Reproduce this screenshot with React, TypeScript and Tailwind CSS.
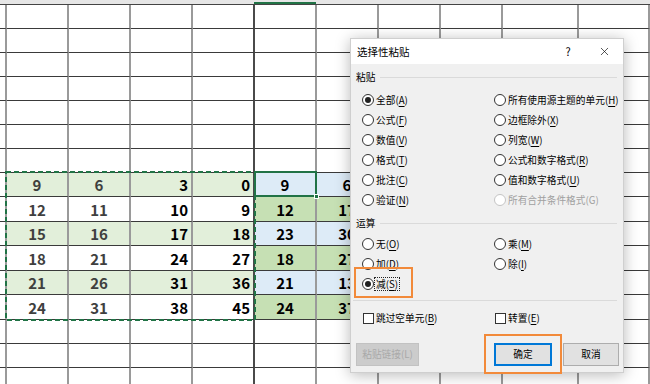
import React from 'react';
import { X } from 'lucide-react';

// column widths incl. right grid line (x lines at 6, 68, 130 ... 502, 578)
const COLS = ['w-[7px]', 'w-[62px]', 'w-[62px]', 'w-[62px]', 'w-[62px]', 'w-[62px]', 'w-[62px]', 'w-[62px]', 'w-[62px]', 'w-[76px]', 'flex-1'];

const ROWS = [
  'h-[24px]', 'h-[24px]', 'h-[24px]', 'h-[24px]', 'h-[24px]', 'h-[24px]', 'h-[24px]',
  'h-[24px]', 'h-[25px]', 'h-[24px]', 'h-[25px]', 'h-[24px]', 'h-[25px]',
  'h-[24px]', 'h-[24px]', 'h-[24px]',
];

const DATA: { vals: string[]; band: boolean }[] = [
  { vals: ['9', '6', '3', '0', '9', '6'], band: true },
  { vals: ['12', '11', '10', '9', '12', '17'], band: false },
  { vals: ['15', '16', '17', '18', '23', '30'], band: true },
  { vals: ['18', '21', '24', '27', '18', '27'], band: false },
  { vals: ['21', '26', '31', '36', '21', '13'], band: true },
  { vals: ['24', '31', '38', '45', '24', '37'], band: false },
];
const FIRST_DATA_ROW = 7;

function cellBg(col: number, band: boolean) {
  if (col >= 1 && col <= 4) return band ? 'bg-[#e2efda]' : 'bg-white';
  if (col === 5 || col === 6) return band ? 'bg-[#ddebf7]' : 'bg-[#c6e0b4]';
  return 'bg-white';
}

function Sheet() {
  return (
    <div className="relative font-['Noto_Sans_CJK_SC',sans-serif]">
      <div className="flex h-[5px] border-b border-b-[#444] bg-[#e6e6e6]">
        <div className="w-[254px]" />
        <div className="w-[62px] border-b-2 border-b-[#217346]" />
      </div>
      {ROWS.map((h, r) => {
        const d = DATA[r - FIRST_DATA_ROW];
        return (
          <div key={r} className={`flex ${h}`}>
            {COLS.map((w, c) => {
              const v = d && c >= 1 && c <= 6 ? d.vals[c - 1] : '';
              const right = c === 3 || c === 4;
              const soft = c === 1 || c === 2;
              return (
                <div
                  key={c}
                  className={[
                    w,
                    'flex shrink-0 items-center border-b border-b-[#3a3a3a] border-r-2 text-[15px] font-bold leading-none',
                    c === 4 ? 'border-r-[#4a4a4a]' : 'border-r-[#9a9a9a]',
                    right ? 'justify-end pr-[3px]' : 'justify-center',
                    soft ? 'text-[#3f3f3f]' : 'text-black',
                    d ? cellBg(c, d.band) : 'bg-white',
                  ].join(' ')}
                >
                  {v}
                </div>
              );
            })}
          </div>
        );
      })}

      {/* copy marquee */}
      <svg className="absolute left-[5px] top-[171px]" width="251" height="150">
        <rect x="1" y="1" width="249" height="148" fill="none" stroke="#217346" strokeWidth="2" strokeDasharray="5 3" />
      </svg>
      {/* active cell */}
      <div className="absolute left-[254px] top-[171px] h-[26px] w-[63px] border-2 border-[#217346]" />
      <div className="absolute left-[314px] top-[194px] h-[5px] w-[5px] border border-white bg-[#217346]" />
    </div>
  );
}

function Key({ text, k }: { text: string; k: string }) {
  return (
    <>
      {text}(<span className="underline underline-offset-2">{k}</span>)
    </>
  );
}

function Radio({ checked, disabled, children }: { checked?: boolean; disabled?: boolean; children: React.ReactNode }) {
  return (
    <div className={`flex h-[20px] items-center ${disabled ? 'text-[#a0a0a0]' : 'text-black'}`}>
      <span
        className={`grid h-[12px] w-[12px] shrink-0 place-items-center rounded-full border bg-white ${
          disabled ? 'border-[#c4c4c4]' : 'border-[#333]'
        }`}
      >
        {checked ? <span className="h-[6px] w-[6px] rounded-full bg-[#222]" /> : null}
      </span>
      <span className="ml-[2px] whitespace-nowrap">{children}</span>
    </div>
  );
}

function Check({ children }: { children: React.ReactNode }) {
  return (
    <div className="flex h-[20px] items-center">
      <span className="ml-[1px] h-[11px] w-[11px] shrink-0 border border-[#333] bg-white" />
      <span className="ml-[2px] whitespace-nowrap">{children}</span>
    </div>
  );
}

function GroupLabel({ children }: { children: React.ReactNode }) {
  return (
    <div className="flex h-[14px] items-center pl-[5px] pr-[6px]">
      <span>{children}</span>
      <span className="ml-[5px] h-px flex-1 bg-[#dadada]" />
    </div>
  );
}

function PasteDialog() {
  return (
    <div className="absolute left-[350px] top-[38px] flex h-[335px] w-[274px] flex-col border border-[#cfcfcf] bg-[#f0f0f0] font-['Noto_Sans_CJK_SC',sans-serif] text-[9.7px] text-black shadow-[0_2px_14px_rgba(0,0,0,0.28)]">
      <div className="flex h-[25px] items-center bg-white pl-[6px] pr-[9px]">
        <span className="flex-1 text-[10.5px]">选择性粘贴</span>
        <span className="w-[20px] text-center text-[11px]">?</span>
        <span className="ml-[16px] grid w-[20px] place-items-center">
          <X size={13} strokeWidth={1.2} />
        </span>
      </div>

      <div className="mt-[6px]">
        <GroupLabel>粘贴</GroupLabel>
      </div>
      <div className="mt-[6px] grid grid-cols-[132px_1fr] pl-[11px]">
        <Radio checked><Key text="全部" k="A" /></Radio>
        <Radio><Key text="所有使用源主题的单元" k="H" /></Radio>
        <Radio><Key text="公式" k="F" /></Radio>
        <Radio><Key text="边框除外" k="X" /></Radio>
        <Radio><Key text="数值" k="V" /></Radio>
        <Radio><Key text="列宽" k="W" /></Radio>
        <Radio><Key text="格式" k="T" /></Radio>
        <Radio><Key text="公式和数字格式" k="R" /></Radio>
        <Radio><Key text="批注" k="C" /></Radio>
        <Radio><Key text="值和数字格式" k="U" /></Radio>
        <Radio><Key text="验证" k="N" /></Radio>
        <Radio disabled>所有合并条件格式(G)</Radio>
      </div>

      <div className="mt-[6px]">
        <GroupLabel>运算</GroupLabel>
      </div>
      <div className="mt-[4px] grid grid-cols-[132px_1fr] pl-[11px]">
        <Radio><Key text="无" k="O" /></Radio>
        <Radio><Key text="乘" k="M" /></Radio>
        <Radio><Key text="加" k="D" /></Radio>
        <Radio><Key text="除" k="I" /></Radio>
        <div className="flex h-[20px] items-center">
          <span className="grid h-[12px] w-[12px] shrink-0 place-items-center rounded-full border border-[#333] bg-white">
            <span className="h-[6px] w-[6px] rounded-full bg-[#222]" />
          </span>
          <span className="ml-0 border border-dotted border-[#222] px-[1px] leading-[12px]">
            <Key text="减" k="S" />
          </span>
        </div>
      </div>

      <div className="mx-[2px] mt-[6px] h-px bg-[#dadada] mr-[6px]" />

      <div className="mt-[7px] grid grid-cols-[132px_1fr] pl-[11px]">
        <Check><Key text="跳过空单元" k="B" /></Check>
        <Check><Key text="转置" k="E" /></Check>
      </div>

      <div className="mt-[15px] flex pl-[5px]">
        <button
          type="button"
          disabled
          className="h-[23px] w-[63px] border border-[#c2c2c2] bg-[#cccccc] text-[9.7px] text-[#a9a9a9]"
        >
          粘贴链接(L)
        </button>
        <button
          type="button"
          className="ml-[75px] h-[23px] w-[58px] border-2 border-[#0078d7] bg-[#e1e1e1] text-[9.7px]"
        >
          确定
        </button>
        <button
          type="button"
          className="ml-[11px] h-[23px] w-[56px] border border-[#adadad] bg-[#e1e1e1] text-[9.7px]"
        >
          取消
        </button>
      </div>

      {/* annotation boxes */}
      <div className="absolute left-[3px] top-[228px] h-[31px] w-[59px] border-2 border-[#f28a3a]" />
      <div className="absolute left-[133px] top-[295px] h-[40px] w-[78px] border-2 border-[#f28a3a]" />
    </div>
  );
}

export default function App() {
  return (
    <div className="relative h-[384px] w-[650px] overflow-hidden bg-white">
      <Sheet />
      <PasteDialog />
    </div>
  );
}
